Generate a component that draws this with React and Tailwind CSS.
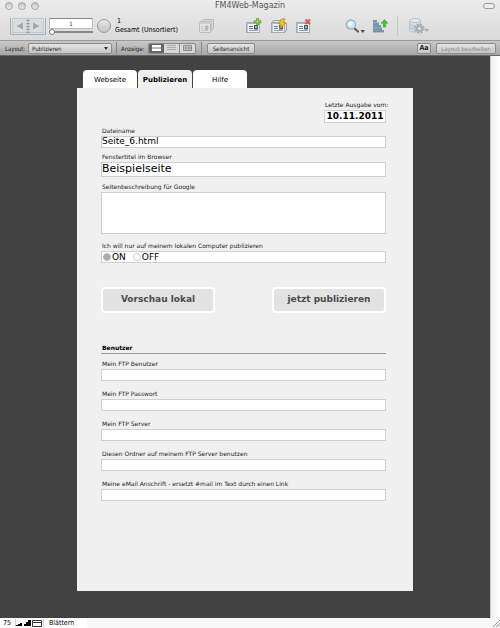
import { useState } from "react";
import clsx from "clsx";

const tabs = ["Webseite", "Publizieren", "Hilfe"];

const ftpFields = [
  { id: "ftp-user", label: "Mein FTP Benutzer", type: "text" },
  { id: "ftp-password", label: "Mein FTP Passwort", type: "password" },
  { id: "ftp-server", label: "Mein FTP Server", type: "text" },
  { id: "ftp-folder", label: "Diesen Ordner auf meinem FTP Server benutzen", type: "text" },
  {
    id: "email",
    label: "Meine eMail Anschrift - ersetzt #mail im Text durch einen Link",
    type: "text",
  },
];

function BookIcon() {
  return (
    <svg width="36" height="17" viewBox="0 0 36 17" fill="none">
      <path d="M.5 0v16.500h35V0" stroke="#a9b0b5" />
      <path d="M2.500.5h15v14h-15zM18.500.5h15v14h-15z" fill="#d9dcde" stroke="#c3c9cd" />
      <path d="M13 4.500v7L6.500 8zM23 4.500v7L29.500 8z" fill="#a0a7ac" />
      <path d="M18 0v17" stroke="#b9c0c5" strokeWidth="2" />
      <path d="M16.500 2.500h3M16.500 5.500h3M16.500 8.500h3M16.500 11.500h3M16.500 14.500h3" stroke="#9da5ab" strokeLinecap="round" />
    </svg>
  );
}

function StackIcon() {
  return (
    <svg width="15" height="14" viewBox="0 0 15 14" fill="#dcdcdc" stroke="#b9bcbe">
      <path d="M.5 4 4 .5h10.500v9L11.500 13z" strokeLinejoin="round" />
      <path d="M2.200 2.300h10.500v9" fill="none" />
      <rect x=".5" y="4" width="11" height="9.500" rx="1" fill="#e4e4e4" />
      <path d="M6.500 7h2.500v3.500H6.500z" fill="#b4b7b9" />
      <path d="M2 7.500h3M2 9.500h3M2 11.500h7" stroke="#c6c8ca" />
    </svg>
  );
}

function RecordCard({ children }) {
  return (
    <svg width="16" height="16" viewBox="0 0 16 16" fill="none">
      <rect x=".5" y="4.500" width="13" height="10" fill="#f1f5f8" stroke="#a3acb4" />
      <path d="M1 5.500h12" stroke="#9db8cc" />
      <path d="M1.500 5v9" stroke="#b9c6d0" />
      <path d="M3 8.500h4M3 10.500h4" stroke="#6d747a" />
      <path d="M3 12.500h9" stroke="#7fa9ca" />
      <path d="M8 7h4v4.500H8z" fill="#4d5870" />
      <path d="M9 8h2v2H9z" fill="#d0a080" />
      {children}
    </svg>
  );
}

function AddIcon() {
  return (
    <RecordCard>
      <path
        d="M10.500.5h2v2.300H15v2h-2.500V7h-2V4.800H8v-2h2.500z"
        fill="#9bd45c"
        stroke="#5c9c35"
        strokeWidth=".8"
      />
    </RecordCard>
  );
}

function DuplicateIcon() {
  return (
    <RecordCard>
      <path d="M.5 4.500 3 2.500h9M13.500 14.500l2-2V5" stroke="#9aa3ab" />
      <path
        d="M10.500 1 7.500 6l2.500.3L8.500 10.500 15 5l-2.700-.5L14 1z"
        fill="#f7cb27"
        stroke="#b8850c"
        strokeWidth=".8"
      />
    </RecordCard>
  );
}

function DeleteIcon() {
  return (
    <RecordCard>
      <path d="m9.500 1.500 4.500 4.500M14 1.500 9.500 6" stroke="#dc5b50" strokeWidth="2.400" />
    </RecordCard>
  );
}

function SearchIcon() {
  return (
    <svg width="20" height="15" viewBox="0 0 20 15" fill="none">
      <path d="m9 9 4 3.500" stroke="#5c6063" strokeWidth="2.200" strokeLinecap="round" />
      <circle cx="6" cy="5.500" r="4.600" fill="#bdeaf8" stroke="#a3abb0" strokeWidth="1.200" />
      <circle cx="5.500" cy="5" r="2.200" fill="#edfbff" />
      <path d="M15.500 11h4.500l-2.200 3z" fill="#4a4a4a" />
    </svg>
  );
}

function SortIcon() {
  return (
    <svg width="16" height="14" viewBox="0 0 16 14">
      <path d="M0 1h4v2H0zM0 3.500h6v2H0zM0 6h8v2H0zM0 8.500h9v2H0zM0 11h11v2H0z" fill="#7e9dbc" />
      <path d="M0 3h4M0 5.500h6M0 8h8M0 10.500h9M0 13h11" stroke="#56738f" strokeWidth=".6" />
      <path d="M11.500.5 15 4.300h-2.200V8h-2.600V4.300H8z" fill="#3fc52f" stroke="#3aa930" strokeWidth=".5" />
    </svg>
  );
}

function DatabaseIcon() {
  return (
    <svg width="20" height="16" viewBox="0 0 20 16" fill="none">
      <path d="M.5 2.500v9.500c0 1.200 2.400 2 5.500 2s5.500-.8 5.500-2V2.500" fill="#d5dde4" stroke="#b9c2ca" />
      <ellipse cx="6" cy="2.500" rx="5.500" ry="2" fill="#e3e8ed" stroke="#b9c2ca" />
      <path d="M.5 6c0 1.200 2.400 2 5.500 2s5.500-.8 5.500-2M.5 9c0 1.200 2.400 2 5.500 2" stroke="#b3bdc6" />
      <circle cx="10.500" cy="10.500" r="4.300" stroke="#a3a9ae" strokeWidth="1.600" strokeDasharray="2 1.370" />
      <circle cx="10.500" cy="10.500" r="2.600" fill="#dfe1e3" stroke="#a7adb2" strokeWidth="2" />
      <path d="M15.500 11h4.500l-2.200 3z" fill="#aaa" />
    </svg>
  );
}

function ToolButton({ label, className, children }) {
  return (
    <button aria-label={label} className={clsx("shrink-0", className)}>
      {children}
    </button>
  );
}

function TitleBar() {
  return (
    <div className="grid h-3 grid-cols-[1fr_auto_1fr] items-center px-[5px]">
      <div className="flex gap-[5px]">
        {["Schließen", "Minimieren", "Zoomen"].map((name) => (
          <button
            key={name}
            aria-label={name}
            className="size-2 rounded-full border border-[#a5a5a5] bg-linear-to-b from-[#c4c4c4] to-[#eee]"
          />
        ))}
      </div>
      <h1 className="font-['DejaVu_Sans',sans-serif] text-[8px] leading-3 text-[#555]">FM4Web-Magazin</h1>
      <button
        aria-label="Symbolleiste"
        className="h-[6px] w-3 justify-self-end rounded-full border border-[#999] bg-[#eee]"
      />
    </div>
  );
}

function Toolbar() {
  const [record, setRecord] = useState(1);

  return (
    <div className="flex h-7 items-center pr-[71px] pl-[10px]">
      <ToolButton label="Datensatz blättern">
        <BookIcon />
      </ToolButton>
      <div className="ml-[3px] flex w-11 flex-col">
        <input
          aria-label="Datensatz"
          value={record}
          onChange={(e) => setRecord(e.target.value)}
          className="h-[11px] w-full border border-[#bbb] border-t-[#888] bg-white text-center text-[6px] text-[#333]"
        />
        <input
          type="range"
          aria-label="Datensatzposition"
          defaultValue="0"
          className="h-[6px] w-full appearance-none bg-[linear-gradient(#888,#888)] bg-size-[100%_2px] bg-center bg-no-repeat [&::-webkit-slider-thumb]:size-[6px] [&::-webkit-slider-thumb]:appearance-none [&::-webkit-slider-thumb]:rounded-full [&::-webkit-slider-thumb]:border [&::-webkit-slider-thumb]:border-[#777] [&::-webkit-slider-thumb]:bg-white"
        />
      </div>
      <button
        aria-label="Ergebnismenge"
        className="ml-1 size-[14px] shrink-0 rounded-full border border-[#999] bg-linear-to-b from-[#e8e8e8] to-[#c4c4c4]"
      />
      <div className="ml-1 w-[84px] text-[7px] leading-[9px] whitespace-nowrap text-black">
        <p className="pl-[2px]">1</p>
        <p>Gesamt (Unsortiert)</p>
      </div>
      <ToolButton label="Datensätze anzeigen">
        <StackIcon />
      </ToolButton>
      <div className="ml-8 flex gap-[9px]">
        <ToolButton label="Neuer Datensatz">
          <AddIcon />
        </ToolButton>
        <ToolButton label="Datensatz duplizieren">
          <DuplicateIcon />
        </ToolButton>
        <ToolButton label="Datensatz löschen">
          <DeleteIcon />
        </ToolButton>
      </div>
      <div className="ml-auto flex items-center">
        <ToolButton label="Suchen">
          <SearchIcon />
        </ToolButton>
        <ToolButton label="Sortieren" className="ml-2">
          <SortIcon />
        </ToolButton>
        <span className="ml-2 h-5 w-px bg-[#c4c4c4]" />
        <ToolButton label="Datenbanken verwalten" className="ml-[11px]">
          <DatabaseIcon />
        </ToolButton>
      </div>
    </div>
  );
}

const barButton =
  "h-[11px] rounded-[2px] border border-[#8a8a8a] bg-linear-to-b from-[#e4e4e4] to-[#c6c6c6] text-center leading-[9px] whitespace-nowrap";

function LayoutBar() {
  return (
    <div className="flex h-4 items-center border-y border-t-[#999] border-b-[#666] bg-linear-to-b from-[#c8c8c8] to-[#a6a6a6] pr-1 pl-[5px] text-[6px] text-[#222]">
      <label htmlFor="layout" className="w-[23px]">
        Layout:
      </label>
      <div className="grid w-[84px] items-center">
        <select
          id="layout"
          className={clsx(barButton, "col-start-1 row-start-1 w-full appearance-none pl-[3px] text-left")}
        >
          <option>Publizieren</option>
        </select>
        <svg
          width="4"
          height="3"
          viewBox="0 0 4 3"
          className="pointer-events-none col-start-1 row-start-1 mr-1 justify-self-end"
        >
          <path d="M0 0h4L2 3z" fill="#333" />
        </svg>
      </div>
      <span className="ml-1 h-3 w-px bg-[#888]" />
      <span className="ml-1 w-[27px]">Anzeige:</span>
      <div className="flex overflow-hidden rounded-[2px] border border-[#888] bg-[#d8d8d8]">
        <button aria-label="Formular" className="flex h-[9px] w-[15px] items-center justify-center bg-[#666]">
          <svg width="9" height="6" viewBox="0 0 9 6">
            <path d="M0 0h9v6H0z" fill="#fff" />
            <path d="M0 3h9" stroke="#777" />
          </svg>
        </button>
        <button aria-label="Liste" className="flex h-[9px] w-[15px] items-center justify-center">
          <svg width="9" height="6" viewBox="0 0 9 6">
            <path d="M0 .5h9M0 2.500h9M0 4.500h9" stroke="#aaa" />
          </svg>
        </button>
        <button
          aria-label="Tabelle"
          className="flex h-[9px] w-4 items-center justify-center border-l border-[#888]"
        >
          <svg width="9" height="6" viewBox="0 0 9 6" fill="none" stroke="#888">
            <path d="M.5.5h8v5h-8zM0 3h9M3 0v6M6 0v6" />
          </svg>
        </button>
      </div>
      <span className="ml-[5px] h-3 w-px bg-[#888]" />
      <button className={clsx(barButton, "ml-[5px] w-12")}>Seitenansicht</button>
      <button
        aria-label="Formatierungsleiste"
        className={clsx(barButton, "ml-auto w-[14px] text-[7px] font-bold")}
      >
        Aa
      </button>
      <button disabled className={clsx(barButton, "ml-[5px] w-[60px] text-[#888]")}>
        Layout bearbeiten
      </button>
    </div>
  );
}

const inputBox = "block w-full border border-[#d0d0d0] bg-white text-black outline-none";

const labelText = "mb-px block h-2 pl-px text-[6px] leading-2 whitespace-nowrap text-[#222]";

function Field({ id, label, className, children }) {
  return (
    <div className={className}>
      <label htmlFor={id} className={labelText}>
        {label}
      </label>
      {children}
    </div>
  );
}

function PublishForm() {
  const [local, setLocal] = useState("ON");

  return (
    <form className="bg-[#f0f0f0] pt-[13px] pr-[27px] pb-[90px] pl-6" onSubmit={(e) => e.preventDefault()}>
      <Field id="last-issue" label="Letzte Ausgabe vom:" className="ml-auto w-[62px]">
        <input
          id="last-issue"
          defaultValue="10.11.2011"
          className={clsx(inputBox, "h-[13px] text-center text-[9px] font-bold")}
        />
      </Field>
      <Field id="filename" label="Dateiname" className="mt-1">
        <input id="filename" defaultValue="Seite_6.html" className={clsx(inputBox, "h-3 text-[9px]")} />
      </Field>
      <Field id="window-title" label="Fenstertitel im Browser" className="mt-[5px]">
        <input id="window-title" defaultValue="Beispielseite" className={clsx(inputBox, "h-[15px] text-[11px]")} />
      </Field>
      <Field id="description" label="Seitenbeschreibung für Google" className="mt-[6px]">
        <textarea id="description" className={clsx(inputBox, "h-[42px] resize-none text-[9px]")} />
      </Field>

      <fieldset className="mt-2">
        <legend className={labelText}>Ich will nur auf meinem lokalen Computer publizieren</legend>
        <div className="flex h-3 items-center gap-[7px] border border-[#d0d0d0] bg-white px-px text-[9px] leading-[10px]">
          {["ON", "OFF"].map((value) => (
            <label key={value} className="flex items-center gap-px">
              <input
                type="radio"
                name="local"
                checked={local === value}
                onChange={() => setLocal(value)}
                className="size-2 appearance-none rounded-full border border-[#ccc] bg-white checked:border-[#bbb] checked:bg-[#aaa]"
              />
              {value}
            </label>
          ))}
        </div>
      </fieldset>

      <div className="mt-6 flex justify-between text-[9px] font-bold text-[#4a4a4a]">
        <button className="h-[26px] w-[114px] rounded-[4px] border-2 border-white bg-[#e2e2e2]">
          Vorschau lokal
        </button>
        <button className="h-[26px] w-[114px] rounded-[4px] border-2 border-white bg-[#e2e2e2]">
          jetzt publizieren
        </button>
      </div>

      <h2 className="mt-[31px] border-b border-[#999] pb-px pl-px text-[6px] leading-2 font-bold text-black">
        Benutzer
      </h2>
      <div className="mt-[6px] flex flex-col gap-[9px]">
        {ftpFields.map((field) => (
          <Field key={field.id} id={field.id} label={field.label}>
            <input id={field.id} type={field.type} className={clsx(inputBox, "h-3 text-[9px]")} />
          </Field>
        ))}
      </div>
    </form>
  );
}

function StatusBar() {
  return (
    <footer className="flex h-[10px] items-center bg-[#f8f8f8] text-[7px] leading-[10px] text-black">
      <div className="flex h-full w-[87px] items-center bg-white pl-[3px]">
        <span className="w-[12px]">75</span>
        <button aria-label="Verkleinern" className="border-l border-[#ccc]">
          <svg width="8" height="8" viewBox="0 0 8 8">
            <path d="M0 7V6h2V5h2V4h2v3z" />
          </svg>
        </button>
        <button aria-label="Vergrößern">
          <svg width="8" height="8" viewBox="0 0 8 8">
            <path d="M0 7V5h2V3h2V1h3v6z" />
          </svg>
        </button>
        <button aria-label="Statusbereich" className="border-r border-[#ccc] pr-px">
          <svg width="10" height="8" viewBox="0 0 10 8" fill="#fff" stroke="#333">
            <path d="M.5 1.500h9v6h-9zM0 3.500h10" />
          </svg>
        </button>
        <span className="ml-[5px]">Blättern</span>
      </div>
      <svg width="8" height="8" viewBox="0 0 8 8" className="ml-auto" stroke="#999">
        <path d="m1 8 7-7M4 8l4-4M6.500 8 8 6.500" />
      </svg>
    </footer>
  );
}

function App() {
  const [activeTab, setActiveTab] = useState("Publizieren");

  return (
    <div className="flex min-h-screen flex-col bg-white font-['DejaVu_Sans_Condensed','DejaVu_Sans',sans-serif]">
      <header>
        <div className="bg-linear-to-b from-[#ececec] to-[#dadada]">
          <TitleBar />
          <Toolbar />
        </div>
        <LayoutBar />
      </header>

      <div className="flex flex-1">
        <main className="flex-1 bg-[#424242] pt-[14px] pb-[27px] font-['DejaVu_Sans',sans-serif]">
          <div className="mx-auto max-w-[336px]">
            <nav className="flex gap-px pl-[6px]">
              {tabs.map((tab) => (
                <button
                  key={tab}
                  onClick={() => setActiveTab(tab)}
                  className={clsx(
                    "h-[18px] w-[54px] rounded-t-[4px] pt-[2px] text-[7px] text-black",
                    tab === activeTab ? "bg-[#f0f0f0] font-bold" : "bg-white"
                  )}
                >
                  {tab}
                </button>
              ))}
            </nav>
            <PublishForm />
          </div>
        </main>
        <div className="w-[10px] border-l border-[#ccc] bg-linear-to-r from-[#eee] to-white" />
      </div>

      <StatusBar />
    </div>
  );
}

export default App;
